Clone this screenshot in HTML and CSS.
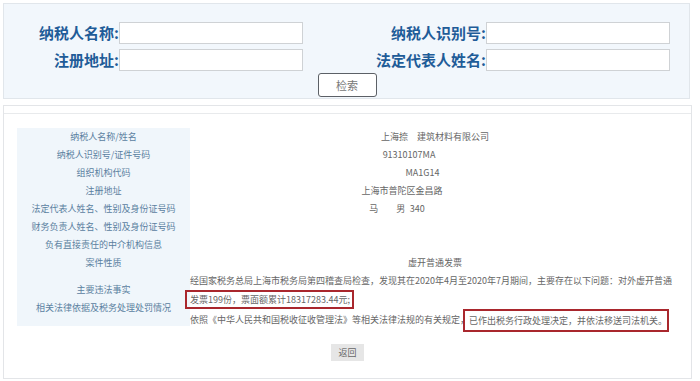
FILE: index.html
```html
<!DOCTYPE html>
<html lang="zh-CN">

<head>
    <meta charset="UTF-8" />
    <meta name="viewport" content="width=device-width, initial-scale=1" />
    <title>重大税收违法案件查询</title>
    <link rel="stylesheet" href="styles.css">
</head>

<body>

    <!-- Search panel -->
    <form class="search-panel" onsubmit="return false;">
        <div class="search-grid">
            <label class="field-label">纳税人名称:</label>
            <input class="field-input" type="text" />
            <label class="field-label">纳税人识别号:</label>
            <input class="field-input" type="text" />

            <label class="field-label">注册地址:</label>
            <input class="field-input" type="text" />
            <label class="field-label">法定代表人姓名:</label>
            <input class="field-input" type="text" />
        </div>
        <button class="search-btn" type="submit">检索</button>
    </form>

    <!-- Result panel -->
    <section class="result-panel">
        <div class="result-head"></div>

        <div class="result-body">
            <div class="case-table">
                <div class="case-label">纳税人名称/姓名</div>
                <div class="case-value">上海捺&#12288;建筑材料有限公司</div>

                <div class="case-label">纳税人识别号/证件号码</div>
                <div class="case-value val-taxid">91310107MA</div>

                <div class="case-label">组织机构代码</div>
                <div class="case-value val-org">MA1G14</div>

                <div class="case-label">注册地址</div>
                <div class="case-value val-addr">上海市普陀区金昌路</div>

                <div class="case-label">法定代表人姓名、性别及身份证号码</div>
                <div class="case-value val-person">马&emsp;&emsp;男&ensp;340</div>

                <div class="case-label">财务负责人姓名、性别及身份证号码</div>
                <div class="case-value"></div>

                <div class="case-label">负有直接责任的中介机构信息</div>
                <div class="case-value"></div>

                <div class="case-label">案件性质</div>
                <div class="case-value">虚开普通发票</div>

                <div class="case-label case-label-group">
                    <div>主要违法事实</div>
                    <div>相关法律依据及税务处理处罚情况</div>
                </div>
                <div class="case-text">
                    <div>经国家税务总局上海市税务局第四稽查局检查，发现其在2020年4月至2020年7月期间，主要存在以下问题：对外虚开普通</div>
                    <div><span class="mark mark-first">发票199份，票面额累计18317283.44元;</span></div>
                    <div>依照《中华人民共和国税收征收管理法》等相关法律法规的有关规定，<span class="mark mark-second">已作出税务行政处理决定，并依法移送司法机关。</span></div>
                </div>
            </div>

            <div class="back-row">
                <button class="back-btn" type="button">返回</button>
            </div>
        </div>
    </section>

</body>

</html>
```

FILE: styles.css
```css
* {
    margin: 0;
    padding: 0;
    box-sizing: border-box;
    font-family: "Microsoft YaHei", "Noto Sans CJK SC", sans-serif;
}

body {
    background-color: #ffffff;
}

/* Search panel */
.search-panel {
    display: flex;
    flex-direction: column;
    align-items: center;
    height: 96px;
    margin: 3px 10px 0 3px;
    padding-top: 18px;
    background-color: #f2f7fc;
    border: 1px solid #e1e6eb;
}

.search-grid {
    display: grid;
    grid-template-columns: 115px 184px 183px 184px;
    grid-auto-rows: 22px;
    row-gap: 5px;
    align-self: flex-start;
}

.field-label {
    text-align: right;
    line-height: 22px;
    font-size: 15px;
    font-weight: bold;
    color: #1f5c98;
}

.field-input {
    height: 22px;
    border: 1px solid #cfd2d5;
    background-color: #ffffff;
}

.search-btn {
    width: 59px;
    height: 24px;
    margin-top: 2px;
    margin-left: 1px;
    background-color: #ffffff;
    border: 1px solid #5c6066;
    border-radius: 3px;
    font-size: 11px;
    color: #777;
    cursor: pointer;
}

/* Result panel */
.result-panel {
    height: 274px;
    margin: 6px 8px 0 3px;
    border: 1px solid #e3e5e8;
}

.result-head {
    height: 8px;
    border-bottom: 1px solid #e8eaec;
}

.result-body {
    padding: 14px 0 0 13px;
}

.case-table {
    display: grid;
    grid-template-columns: 173px 490px;
    grid-auto-rows: 18px;
    font-size: 9px;
    line-height: 18px;
}

.case-label {
    background-color: #f0f6fb;
    text-align: center;
    color: #5a80a0;
}

.case-label-group {
    grid-row: span 3;
    padding-top: 9px;
}

.case-value {
    text-align: center;
    color: #666;
    white-space: nowrap;
}

.val-taxid {
    padding-right: 52px;
}

.val-org {
    padding-right: 25px;
}

.val-addr {
    padding-right: 66px;
}

.val-person {
    padding-right: 76px;
}

.case-text {
    grid-row: span 3;
    color: #666;
    white-space: nowrap;
}

.mark {
    display: inline-block;
    border: 2px solid #a9272d;
    vertical-align: middle;
}

.mark-first {
    margin-left: -5px;
    padding: 0 2px 0 3px;
    line-height: 15px;
}

.mark-second {
    margin-left: -6px;
    padding: 0 0 0 4px;
    line-height: 19px;
}

.back-row {
    display: flex;
    justify-content: center;
    padding-right: 13px;
    margin-top: 18px;
}

.back-btn {
    height: 17px;
    padding: 0 7px;
    background-color: #e6e6e6;
    border: none;
    font-size: 9px;
    color: #666;
    cursor: pointer;
}
```
